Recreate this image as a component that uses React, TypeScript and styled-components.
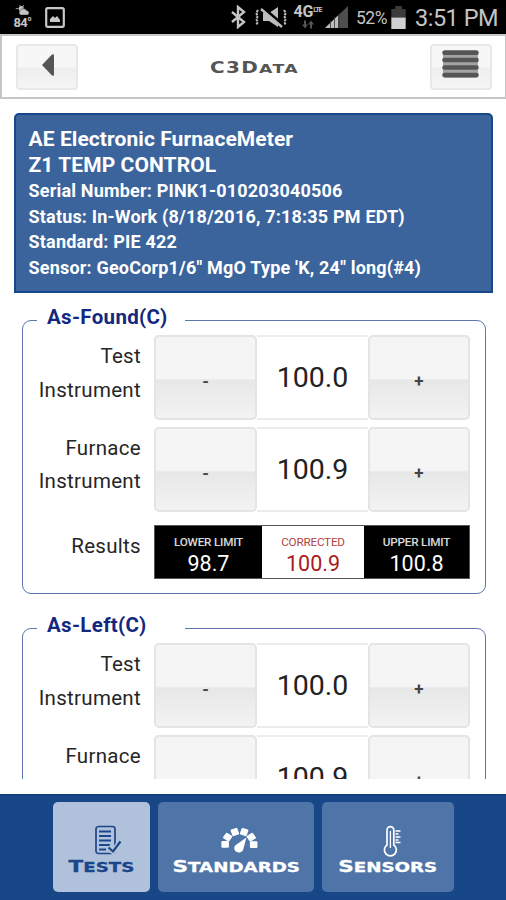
import React from "react";
import styled, { createGlobalStyle } from "styled-components";

const GlobalStyle = createGlobalStyle`
  * { box-sizing: border-box; }
  body { margin: 0; background: #fff; font-family: Roboto, "Liberation Sans", sans-serif; }
  button { font-family: inherit; padding: 0; margin: 0; }
`;

const Screen = styled.div`
  width: 506px;
  height: 900px;
  display: flex;
  flex-direction: column;
  overflow: hidden;
  background: #fff;
`;

const StatusBar = styled.header`
  flex: none;
  height: 34px;
  display: flex;
  align-items: center;
  background: #000;
  color: #c4c4c4;
  padding: 0 9px 0 12px;
  white-space: nowrap;
  svg { display: block; flex: none; }
`;

const Weather = styled.div`
  width: 20px;
  height: 25px;
  display: flex;
  flex-direction: column;
  align-items: center;
  font: 700 13px/14px Roboto, sans-serif;
  svg { margin-left: 2px; }
  span { margin-left: 1px; letter-spacing: -0.7px; }
`;

const PhotoIcon = styled.svg`
  margin-left: 13px;
  margin-right: auto;
`;

const MuteIcon = styled.svg`
  margin-left: 7px;
`;

const Network = styled.div`
  width: 29px;
  height: 27px;
  margin: 0 3px 0 5px;
  display: flex;
  flex-direction: column;
  align-items: center;
`;

const NetworkName = styled.div`
  display: flex;
  font: 700 16px/16px Roboto, sans-serif;
  letter-spacing: -0.2px;
  small { font-size: 7px; line-height: 12px; font-weight: 700; letter-spacing: -1px; }
`;

const Percent = styled.span`
  font-size: 17.5px;
  letter-spacing: -0.5px;
  margin-left: 8px;
  width: 35px;
  padding-top: 2px;
`;

const Clock = styled.span`
  font-size: 23.5px;
  line-height: 30px;
  width: 82px;
  margin-left: 9px;
  letter-spacing: -0.5px;
  padding-top: 1px;
`;

const TitleBar = styled.div`
  flex: none;
  height: 65px;
  display: flex;
  align-items: flex-start;
  justify-content: space-between;
  padding: 8px 13px 0 14px;
  border: 2px solid #c6c6c6;
  border-right-width: 1px;
`;

const GlossButton = styled.button`
  width: 62px;
  height: 46px;
  display: flex;
  align-items: flex-start;
  justify-content: center;
  border: 2px solid #e8e8e8;
  border-radius: 4px;
  background: linear-gradient(#f7f7f7 0 50%, #eeeeee 52%, #f5f5f5 100%);
  svg { display: block; }
`;

const Title = styled.h1`
  margin: 14px 0 0;
  font: 700 13px/20px "DejaVu Sans", sans-serif;
  letter-spacing: 1px;
  color: #555;
  text-transform: uppercase;
  transform: scaleX(1.33);
  span { font-size: 15px; }
`;

const Content = styled.main`
  flex: none;
  height: 680px;
  overflow: hidden;
  padding: 14px 13px 0 14px;
`;

const InfoPanel = styled.section`
  height: 180px;
  padding: 12px 12.5px;
  background: #3b649c;
  border: 2px solid #164789;
  border-radius: 5px 5px 0 0;
  color: #fff;
  font-weight: 700;
  white-space: nowrap;
`;

const InfoTitle = styled.div`
  font-size: 21px;
  line-height: 25.5px;
  letter-spacing: 0.08px;
`;

const InfoLine = styled.div`
  font-size: 18px;
  line-height: 25.5px;
  letter-spacing: 0.19px;
`;

const Group = styled.fieldset`
  height: 286px;
  margin: 15px 7px 0 8px;
  padding: 0;
  min-width: 0;
  border: 1.6px solid #5c76ab;
  border-radius: 9px;
  & + & { margin-top: 22px; }
`;

const Legend = styled.legend`
  width: 148px;
  height: 25px;
  margin-left: 14px;
  padding: 0 10px;
  color: #14287e;
  font-weight: 700;
  font-size: 20.5px;
  line-height: 18px;
  letter-spacing: 0.32px;
  white-space: nowrap;
`;

const Row = styled.div`
  display: grid;
  grid-template-columns: 118px 316px;
  column-gap: 13px;
  height: 91.5px;
  padding-top: 2px;
`;

const Label = styled.div<{ $single?: boolean }>`
  text-align: right;
  color: #262626;
  font-size: 20.5px;
  line-height: 33.5px;
  letter-spacing: 0.3px;
  padding-top: ${(p) => (p.$single ? 12 : 5)}px;
`;

const Stepper = styled.div`
  height: 85px;
  display: grid;
  grid-template-columns: 103px 1fr 102px;
`;

const StepButton = styled.button`
  border: 2px solid #e4e4e4;
  border-radius: 5px;
  background: linear-gradient(#f5f5f5 0 51.5%, #e7e7e7 53%, #f3f3f3 100%);
  color: #444;
  font-weight: 700;
  font-size: 17px;
  line-height: 20px;
  padding: 7px 0 0;
`;

const Value = styled.div`
  border: solid #ececec;
  border-width: 2px 0;
  text-align: center;
  font-size: 28.5px;
  line-height: 81px;
  color: #222;
`;

const Results = styled.div`
  height: 54px;
  display: grid;
  grid-template-columns: 107px 102px 1fr;
  border: 1px solid #555;
  background: #000;
  margin-top: 7px;
`;

const Result = styled.div<{ $alert?: boolean }>`
  display: flex;
  flex-direction: column;
  align-items: center;
  padding-top: 7px;
  background: ${(p) => (p.$alert ? "#fff" : "#000")};
  color: ${(p) => (p.$alert ? "#a81c20" : "#fff")};
  small {
    font-size: 11.7px;
    line-height: 18px;
    font-weight: ${(p) => (p.$alert ? 400 : 500)};
    letter-spacing: -0.2px;
    opacity: 0.85;
  }
  strong { font-weight: 400; font-size: 21.5px; line-height: 26px; }
`;

const NavBar = styled.nav`
  flex: none;
  height: 106px;
  margin-top: 15px;
  display: flex;
  gap: 8px;
  padding: 6px 52px 0 53px;
  background: #184788;
  border-top: 2px solid #153f80;
`;

const NavButton = styled.button<{ $width: number; $active?: boolean }>`
  width: ${(p) => p.$width}px;
  height: 90px;
  display: flex;
  flex-direction: column;
  align-items: center;
  border: 0;
  border-radius: 5px;
  background: ${(p) => (p.$active ? "#b0c1db" : "#4f74a8")};
  color: ${(p) => (p.$active ? "#1b468b" : "#fff")};
  svg { display: block; margin-top: 22px; }
`;

const NavLabel = styled.div`
  font: 700 13.5px/20px "DejaVu Sans", sans-serif;
  text-transform: uppercase;
  transform: scaleX(1.35);
  -webkit-text-stroke: 0.3px currentColor;
  margin-top: 1px;
  &::first-letter { font-size: 16px; }
`;

const BluetoothIcon = () => (
  <svg width="17" height="24" viewBox="0 0 17 24" fill="none" stroke="#c4c4c4" strokeWidth="2.4">
    <path d="M2 7l12 10-6 5V2l6 5L2 17" />
  </svg>
);

const VibrateIcon = () => (
  <MuteIcon width="34" height="24" viewBox="0 0 34 24">
    <path
      d="M4 5L2 8l2 3-2 3 2 3-2 3M30 5l2 3-2 3 2 3-2 3 2 3"
      fill="none"
      stroke="#bdbdbd"
      strokeWidth="2"
      strokeDasharray="2.5 1.2"
    />
    <path d="M9 8h6l9-6v20l-9-6H9z" fill="#bdbdbd" />
    <path d="M8 2l21 18" stroke="#000" strokeWidth="3" />
    <path d="M7 4l21 18" stroke="#bdbdbd" strokeWidth="2.4" />
  </MuteIcon>
);

type ReadingProps = { label: string; value: string };

const Reading = ({ label, value }: ReadingProps) => (
  <Row>
    <Label>{label}<br />Instrument</Label>
    <Stepper>
      <StepButton>-</StepButton>
      <Value>{value}</Value>
      <StepButton>+</StepButton>
    </Stepper>
  </Row>
);

const TestGroup = ({ title }: { title: string }) => (
  <Group>
    <Legend>{title}</Legend>
    <Reading label="Test" value="100.0" />
    <Reading label="Furnace" value="100.9" />
    <Row>
      <Label $single>Results</Label>
      <Results>
        <Result><small>LOWER LIMIT</small><strong>98.7</strong></Result>
        <Result $alert><small>CORRECTED</small><strong>100.9</strong></Result>
        <Result><small>UPPER LIMIT</small><strong>100.8</strong></Result>
      </Results>
    </Row>
  </Group>
);

const GAUGE_ANGLES = [-90, -56, -19, 19, 56, 90];

export default function App() {
  return (
    <>
      <GlobalStyle />
      <Screen>
        <StatusBar>
          <Weather>
            <svg width="17" height="11" viewBox="0 0 17 12" fill="#c4c4c4">
              <circle cx="6" cy="4" r="2.8" />
              <path d="M4 0l2 2M0 4h3M9 0L7 3" stroke="#aaa" />
              <path d="M5 11a3 3 0 0 1 0-5 4 4 0 0 1 7 0 2.6 2.6 0 0 1 1 5z" stroke="#000" strokeWidth=".5" />
            </svg>
            <span>84°</span>
          </Weather>
          <PhotoIcon width="20" height="21" viewBox="0 0 20 21">
            <rect x="1.2" y="1.2" width="17.6" height="18.6" rx="1.5" fill="none" stroke="#c8c8c8" strokeWidth="2.2" />
            <path d="M5 15v-3l3-3 2 2 2-2 3 4v2z" fill="#c8c8c8" />
          </PhotoIcon>
          <BluetoothIcon />
          <VibrateIcon />
          <Network>
            <NetworkName>4G<small>LTE</small></NetworkName>
            <svg width="12" height="9" viewBox="0 0 12 8" fill="#555">
              <path d="M2 0h2v4h2L3 8 0 4h2zM8 8h2V4h2L9 0 6 4h2z" />
            </svg>
          </Network>
          <svg width="23" height="22" viewBox="0 0 23 22">
            <path d="M0 22L23 0v22z" fill="#4e4e4e" />
            <path d="M0 22L13 9.5V22z" fill="#bdbdbd" />
            <path d="M5.5 15v7M9.5 11v11M14 7v15" stroke="#333" strokeWidth=".8" />
          </svg>
          <Percent>52%</Percent>
          <svg width="15" height="23" viewBox="0 0 15 24">
            <path d="M0 3h4V0h7v3h4v9H0z" fill="#3b3b3b" />
            <path d="M0 12h15v12H0z" fill="#cfcfcf" />
          </svg>
          <Clock>3:51 PM</Clock>
        </StatusBar>

        <TitleBar>
          <GlossButton aria-label="Back">
            <svg width="58" height="42" viewBox="0 0 58 42"><path d="M24 19L34 8.5h2v21h-2z" fill="#555" /></svg>
          </GlossButton>
          <Title><span>C3D</span>ata</Title>
          <GlossButton aria-label="Menu">
            <svg width="58" height="42" viewBox="0 0 58 42">
              <rect x="11" y="4" width="35" height="28" rx="2" fill="#a4a4a4" />
              <path d="M12.5 6.7h32M12.5 14h32M12.5 21.5h32M12.5 29h32" stroke="#555" strokeWidth="4.6" strokeLinecap="round" />
            </svg>
          </GlossButton>
        </TitleBar>

        <Content>
          <InfoPanel>
            <InfoTitle>AE Electronic FurnaceMeter</InfoTitle>
            <InfoTitle>Z1 TEMP CONTROL</InfoTitle>
            <InfoLine>Serial Number: PINK1-010203040506</InfoLine>
            <InfoLine>Status: In-Work (8/18/2016, 7:18:35 PM EDT)</InfoLine>
            <InfoLine>Standard: PIE 422</InfoLine>
            <InfoLine>Sensor: GeoCorp1/6" MgO Type 'K, 24" long(#4)</InfoLine>
          </InfoPanel>
          <TestGroup title="As-Found(C)" />
          <TestGroup title="As-Left(C)" />
        </Content>

        <NavBar>
          <NavButton $width={97} $active>
            <svg width="30" height="32" viewBox="-4 0 30 32" overflow="visible" fill="none" stroke="#1b468b">
              <rect x="5" y="2.5" width="19" height="27" rx="2.5" strokeWidth="1.7" />
              <path d="M8 7.5h12M8 12h12M8 16.5h12M8 21h11M8 25.5h7" strokeWidth="1.8" />
              <path d="M17 23l5 5 7-11" stroke="#b0c1db" strokeWidth="5" />
              <path d="M17.5 23.5L22 27.5l7.5-10" strokeWidth="2.2" />
            </svg>
            <NavLabel>Tests</NavLabel>
          </NavButton>
          <NavButton $width={156}>
            <svg width="48" height="32" viewBox="-7 0 48 32" fill="#fff">
              <g transform="translate(-1.2 0) scale(1.08 1)">
                {GAUGE_ANGLES.map((angle) => (
                  <rect key={angle} x="16.8" y="3.8" width="6.6" height="7" rx="1" transform={`rotate(${angle} 20 20.5)`} />
                ))}
                <path d="M26.5 13.5l-2.7 11a4.3 4.3 0 1 1-6.5-4z" />
              </g>
            </svg>
            <NavLabel>Standards</NavLabel>
          </NavButton>
          <NavButton $width={132}>
            <svg width="24" height="32" viewBox="0 0 24 32" overflow="visible" fill="none" stroke="#fff">
              <g transform="translate(4 1)">
                <path d="M7 20V5a3.4 3.4 0 0 1 6.8 0v15a6 6 0 1 1-6.8 0z" strokeWidth="1.7" />
                <path d="M10.4 6v17" strokeWidth="1.3" />
                <path d="M15.5 6h5M15.5 9h3M15.5 12h5M15.5 15h3M15.5 17.5h5" strokeWidth="1.5" />
              </g>
            </svg>
            <NavLabel>Sensors</NavLabel>
          </NavButton>
        </NavBar>
      </Screen>
    </>
  );
}
